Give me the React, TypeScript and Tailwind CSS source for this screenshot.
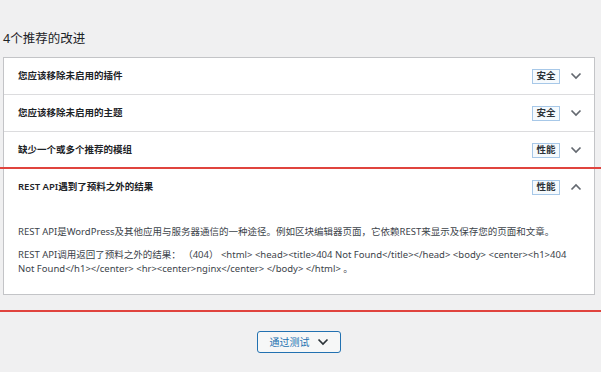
import React from "react";

type Item = {
    title: string;
    badge: string;
    open?: boolean;
};

const items: Item[] = [
    { title: "您应该移除未启用的插件", badge: "安全" },
    { title: "您应该移除未启用的主题", badge: "安全" },
    { title: "缺少一个或多个推荐的模组", badge: "性能" },
    { title: "REST API遇到了预料之外的结果", badge: "性能", open: true },
];

function Chevron({ up = false, className = "" }: { up?: boolean; className?: string }) {
    return (
        <svg width="12" height="8" viewBox="0 0 12 8" className={className}>
            <polyline
                points={up ? "1.5,6.5 6,2 10.5,6.5" : "1.5,1.5 6,6 10.5,1.5"}
                fill="none"
                stroke="currentColor"
                strokeWidth="1.7"
            />
        </svg>
    );
}

function Row({ item, last }: { item: Item; last: boolean }) {
    return (
        <div className={last ? "" : "border-b border-[#dcdcde]"}>
            <div className="h-[36px] flex items-center justify-between pl-[14px] pr-[12px]">
                <span className="text-[9.5px] font-semibold text-[#1d2327]">{item.title}</span>
                <div className="flex items-center gap-[10px]">
                    <span className="h-[15px] px-[3.5px] flex items-center border border-[#a7c8e8] bg-[#f6fafd] text-[9.5px] font-semibold text-[#2c3338]">
                        {item.badge}
                    </span>
                    <Chevron up={item.open} className="text-[#646970]" />
                </div>
            </div>

            {item.open && (
                <div className="pl-[14px] pr-[14px] pt-[20px] pb-[18px] text-[9.5px] leading-[14px] text-[#3c434a]">
                    <p>REST API是WordPress及其他应用与服务器通信的一种途径。例如区块编辑器页面，它依赖REST来显示及保存您的页面和文章。</p>
                    <p className="mt-[9px]">
                        REST API调用返回了预料之外的结果： （404） &lt;html&gt; &lt;head&gt;&lt;title&gt;404 Not Found&lt;/title&gt;&lt;/head&gt; &lt;body&gt; &lt;center&gt;&lt;h1&gt;404 Not Found&lt;/h1&gt;&lt;/center&gt; &lt;hr&gt;&lt;center&gt;nginx&lt;/center&gt; &lt;/body&gt; &lt;/html&gt; 。
                    </p>
                </div>
            )}
        </div>
    );
}

export default function App() {
    return (
        <div className="relative w-[601px] h-[372px] overflow-hidden bg-[#f0f0f1] font-['Noto_Sans','Noto_Sans_CJK_SC',sans-serif]">
            <h2 className="pt-[30px] pl-[3px] h-[57px] text-[12.5px] leading-[18px] font-normal text-[#1d2327]">
                4个推荐的改进
            </h2>

            {/* Accordion card */}
            <div className="ml-[3px] w-[592px] border border-[#c3c4c7] bg-white">
                {items.map((item, i) => (
                    <Row key={item.title} item={item} last={i === items.length - 1} />
                ))}
            </div>

            <div className="flex justify-center pt-[36px]">
                <button className="h-[22px] w-[84px] ml-[-3px] flex items-center justify-center gap-[7px] rounded-[3px] border border-[#2271b1] bg-[#f6f7f7] text-[10px] text-[#2271b1]">
                    通过测试
                    <Chevron className="text-[#2c3338]" />
                </button>
            </div>

            {/* red annotation lines */}
            <div className="absolute left-0 top-[167px] w-full h-[2px] bg-[#e0443e]" />
            <div className="absolute left-0 top-[310px] w-full h-[2px] bg-[#e0443e]" />
        </div>
    );
}
